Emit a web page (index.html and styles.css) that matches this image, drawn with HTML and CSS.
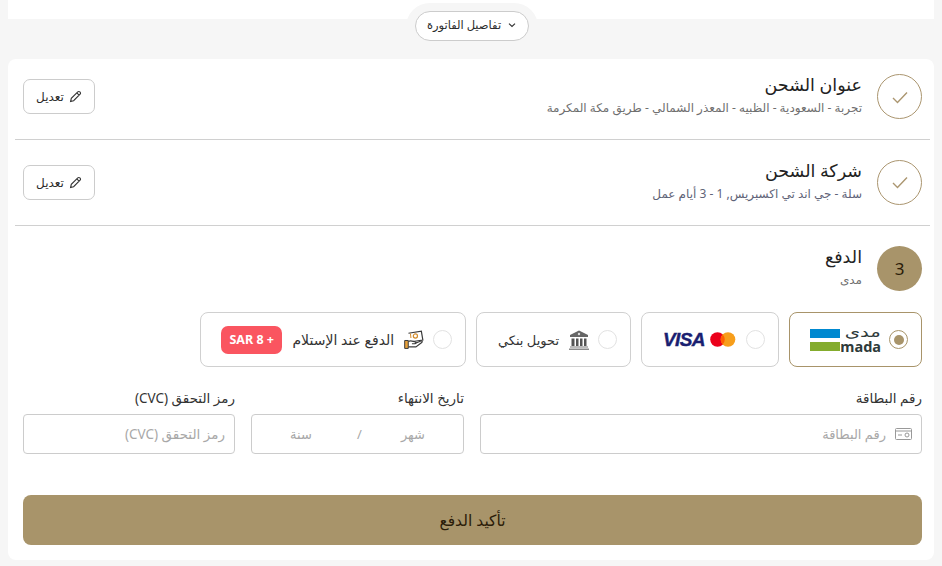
FILE: index.html
```html
<!DOCTYPE html>
<html lang="ar" dir="rtl">
<head>
<meta charset="utf-8">
<title>الدفع</title>
<link rel="stylesheet" href="styles.css">
</head>
<body>
<div class="top-strip">
  <div class="bump">
    <button class="invoice-btn" type="button">
      <svg class="chev" width="10" height="10" viewBox="0 0 10 10"><path d="M2 3.6 5 6.400 8 3.600" fill="none" stroke="#333" stroke-width="1.200"/></svg>
      <span>تفاصيل الفاتورة</span>
    </button>
  </div>
</div>
<main class="card">
  <section class="row row-first">
    <div class="circle done"><svg width="20" height="20" viewBox="0 0 20 20"><path d="M3 11 7.500 15.500 17 5.500" fill="none" stroke="#ab9670" stroke-width="1.400"/></svg></div>
    <div class="row-text">
      <h2>عنوان الشحن</h2>
      <p>تجربة - السعودية - الظبيه - المعذر الشمالي - طريق مكة المكرمة</p>
    </div>
    <button class="edit" type="button">
      <svg width="13" height="13" viewBox="0 0 13 13"><path d="M1.600 11.400 2.300 8.400 8.800 1.900a1.400 1.400 0 0 1 2 0l.3.3a1.400 1.400 0 0 1 0 2L4.600 10.700ZM7.800 2.900 10.100 5.200" fill="none" stroke="#333" stroke-width="1.100"/></svg>
      <span>تعديل</span>
    </button>
  </section>
  <section class="row row-second">
    <div class="circle done"><svg width="20" height="20" viewBox="0 0 20 20"><path d="M3 11 7.500 15.500 17 5.500" fill="none" stroke="#ab9670" stroke-width="1.400"/></svg></div>
    <div class="row-text">
      <h2>شركة الشحن</h2>
      <p class="sub-blue">سلة - جي اند تي اكسبريس, 1 - 3 أيام عمل</p>
    </div>
    <button class="edit" type="button">
      <svg width="13" height="13" viewBox="0 0 13 13"><path d="M1.600 11.400 2.300 8.400 8.800 1.900a1.400 1.400 0 0 1 2 0l.3.3a1.400 1.400 0 0 1 0 2L4.600 10.700ZM7.800 2.900 10.100 5.200" fill="none" stroke="#333" stroke-width="1.100"/></svg>
      <span>تعديل</span>
    </button>
  </section>
  <section class="pay">
    <div class="pay-head">
      <div class="circle step">3</div>
      <div class="row-text">
        <h2>الدفع</h2>
        <p>مدى</p>
      </div>
    </div>
    <div class="options">
      <div class="option opt-mada selected">
        <span class="radio on"></span>
        <span class="mada-logo">
          <span class="mada-bars"><i class="bar-blue"></i><i class="bar-green"></i></span>
          <span class="mada-words"><b class="mada-ar">مدى</b><b class="mada-en">mada</b></span>
        </span>
      </div>
      <div class="option opt-visa">
        <span class="radio"></span>
        <svg class="mc" width="26" height="15" viewBox="0 0 26 15"><circle cx="7.500" cy="7.500" r="7.300" fill="#eb001b"/><circle cx="18" cy="7.500" r="7.300" fill="#f79e1b"/><path d="M12.700 2.400a7.300 7.300 0 0 1 0 10.200a7.300 7.300 0 0 1 0-10.200Z" fill="#ff5f00"/></svg>
        <span class="visa">VISA</span>
      </div>
      <div class="option opt-bank">
        <span class="radio"></span>
        <svg width="20" height="20" viewBox="0 0 20 20"><path d="M10 .5 19 5V7H1V5Z" fill="#666"/><circle cx="10" cy="4" r="1.200" fill="#ddd"/><path d="M2.500 8.500h3V16h-3ZM7 8.500h2.500V16H7ZM11 8.500h2.500V16H11ZM15 8.500h2.500V16H15Z" fill="#555"/><path d="M1 16.500h18v1H1Z" fill="#777"/><path d="M0 18.500h20V20H0Z" fill="#8a8a8a"/></svg>
        <span class="opt-label">تحويل بنكي</span>
      </div>
      <div class="option opt-cod">
        <span class="radio"></span>
        <svg width="20" height="20" viewBox="0 0 20 20"><path d="M4.500 3.200 17.500 1.200 19 10 9 11.500" fill="#fff" stroke="#3a3a3a" stroke-width="1.200"/><circle cx="11.500" cy="6" r="2.100" fill="none" stroke="#d28b2a" stroke-width="1.200"/><path d="M6.500 3.500 7 8" stroke="#d28b2a"/><path d="M.7 10.500h3.600V18.500H.7Z" fill="#e9a23b" stroke="#3a3a3a"/><path d="M4.300 11.500c3-1.500 4.500 0 7 .5 1.500.3 1.300 1.800-.5 1.800H8M11 13.500l6-2.500c1.200-.4 1.900.9.900 1.600L12 17H4.300" fill="#fff" stroke="#3a3a3a" stroke-width="1.200"/></svg>
        <span class="opt-label opt-label-wide">الدفع عند الإستلام</span>
        <span class="fee">SAR 8 +</span>
      </div>
    </div>
    <div class="fields">
      <div class="field f-number">
        <label>رقم البطاقة</label>
        <div class="input">
          <svg width="17" height="12" viewBox="0 0 17 12"><rect x=".5" y=".5" width="16" height="11" rx="1" fill="none" stroke="#999"/><path d="M.5 3h16" stroke="#999"/><path d="M3 7h4" stroke="#999"/><circle cx="12" cy="7" r="2" fill="none" stroke="#999"/></svg>
          <span class="ph">رقم البطاقة</span>
        </div>
      </div>
      <div class="field f-exp">
        <label>تاريخ الانتهاء</label>
        <div class="input exp">
          <span class="ph">شهر</span>
          <span class="ph slash">/</span>
          <span class="ph">سنة</span>
        </div>
      </div>
      <div class="field f-cvc">
        <label>رمز التحقق (CVC)</label>
        <div class="input"><span class="ph">رمز التحقق (CVC)</span></div>
      </div>
    </div>
    <button class="confirm" type="button">تأكيد الدفع</button>
  </section>
</main>
</body>
</html>
```
FILE: styles.css
```css
* { box-sizing: border-box; }
html, body { margin: 0; padding: 0; }
body {
  width: 942px;
  height: 566px;
  overflow: hidden;
  background: #f6f6f6;
  color: #2b2b2b;
  font-family: "Noto Sans", "DejaVu Sans", sans-serif;
  font-size: 12px;
}
button { font-family: inherit; background: #fff; cursor: pointer; color: inherit; }
.top-strip {
  height: 19px;
  margin: 0 8px;
  background: #fff;
  display: flex;
  justify-content: center;
}
.bump {
  width: 132px;
  height: 40px;
  margin-top: 3px;
  background: #f6f6f6;
  border-radius: 24px 24px 0 0;
  display: flex;
  justify-content: center;
  padding-top: 8px;
  flex: none;
  transform: translateX(1px);
}
.invoice-btn {
  width: 114px;
  height: 30px;
  border: 1px solid #ccc;
  border-radius: 15px;
  display: flex;
  align-items: center;
  justify-content: center;
  gap: 6px;
  font-size: 11.500px;
  line-height: 14px;
  padding: 0 0 2px;
}
.card {
  margin: 40px 8px 0;
  height: 501px;
  background: #fff;
  border-radius: 8px;
  padding: 0 4px 0 7px;
}
.row {
  display: flex;
  align-items: center;
  gap: 15px;
  padding: 0 8px;
  border-bottom: 1px solid #d0d0d0;
}
.row-first { height: 81px; padding-bottom: 5px; }
.row-second { height: 86px; padding-bottom: 1px; }
.circle {
  width: 45px;
  height: 45px;
  border-radius: 50%;
  display: flex;
  align-items: center;
  justify-content: center;
  flex: none;
}
.done { border: 1px solid #ab9670; }
.step { background: #a8946a; font-size: 17px; color: #2b1c08; }
.row-text { flex: 1; padding-bottom: 5px; }
h2 { margin: 0; font-size: 17.500px; font-weight: 400; line-height: 24px; color: #222; }
.row-text p { margin: 4px 0 0; font-size: 12px; line-height: 16px; color: #6f6f6f; }
.row-text .sub-blue { color: #5f6478; }
.edit {
  width: 72px;
  height: 35px;
  border: 1px solid #ccc;
  border-radius: 7px;
  display: flex;
  align-items: center;
  justify-content: center;
  gap: 5px;
  font-size: 12px;
  padding: 0;
}
.pay { padding: 20px 8px 0; }
.pay-head { display: flex; align-items: center; gap: 15px; height: 45px; }
.options { display: flex; gap: 10px; margin-top: 21px; }
.option {
  height: 55px;
  border: 1px solid #d0d0d0;
  border-radius: 8px;
  display: flex;
  align-items: center;
  padding: 0 13px;
  gap: 10px;
  flex: none;
}
.opt-mada { width: 133px; }
.opt-visa { width: 138px; }
.opt-bank { width: 155px; }
.opt-cod { width: 266px; }
.selected { border-color: #a8946a; }
.radio {
  width: 19px;
  height: 19px;
  border: 1px solid #e2e2e2;
  border-radius: 50%;
  flex: none;
  display: flex;
  align-items: center;
  justify-content: center;
  margin-left: -1px;
}
.radio.on { border-color: #a8946a; }
.radio.on::after { content: ""; width: 10px; height: 10px; border-radius: 50%; background: #a8946a; }
.opt-label { font-size: 13px; color: #333; white-space: nowrap; }
.opt-label-wide { font-size: 14px; }
.mada-logo { display: flex; gap: 3px; align-items: center; direction: ltr; margin-right: -1px; }
.mada-bars { display: flex; flex-direction: column; gap: 4px; }
.mada-bars i { display: block; width: 30px; height: 9px; }
.bar-blue { background: #0089d0; }
.bar-green { background: #84ac2d; }
.mada-words { display: flex; flex-direction: column; align-items: flex-end; color: #2e3a3a; width: 38px; }
.mada-ar { font-size: 14px; font-weight: 400; line-height: 11px; height: 11px; transform: scaleX(1.400); transform-origin: right center; direction: rtl; }
.mada-en { font-size: 14.500px; font-weight: 700; line-height: 13px; height: 13px; margin-top: 3px; font-family: "Noto Sans", sans-serif; }
.mc { margin-right: 1px; }
.visa { font-family: "Liberation Sans", sans-serif; font-style: italic; font-weight: 700; font-size: 19px; color: #1a1f71; letter-spacing: -.6px; -webkit-text-stroke: .4px #1a1f71; margin-right: -5px; direction: ltr; }
.fee {
  background: #fa5560;
  color: #fff;
  font-weight: 700;
  font-size: 12.500px;
  height: 28px;
  width: 62px;
  border-radius: 7px;
  display: flex;
  align-items: center;
  justify-content: center;
  margin-right: auto;
  margin-left: 7px;
  direction: ltr;
}
.fields { display: flex; gap: 16px; margin-top: 23px; }
.field { flex: none; }
.f-number { width: 442px; }
.f-exp { width: 213px; }
.f-cvc { width: 212px; }
.field label { display: block; font-size: 13.500px; line-height: 16px; margin-bottom: 8px; color: #333; }
.input {
  height: 40px;
  border: 1px solid #ccc;
  border-radius: 4px;
  display: flex;
  align-items: center;
  gap: 9px;
  padding: 0 9px;
}
.ph { color: #a8a8a8; font-size: 13px; }
.f-cvc .ph { font-size: 13.500px; }
.exp { justify-content: space-between; padding: 0 38px; gap: 0; }
.slash { margin-left: 6px; }
.confirm {
  display: block;
  width: 899px;
  height: 50px;
  margin-top: 41px;
  background: #a8946a;
  border: 0;
  border-radius: 8px;
  font-size: 15.500px;
  color: #2b1c08;
}
```
